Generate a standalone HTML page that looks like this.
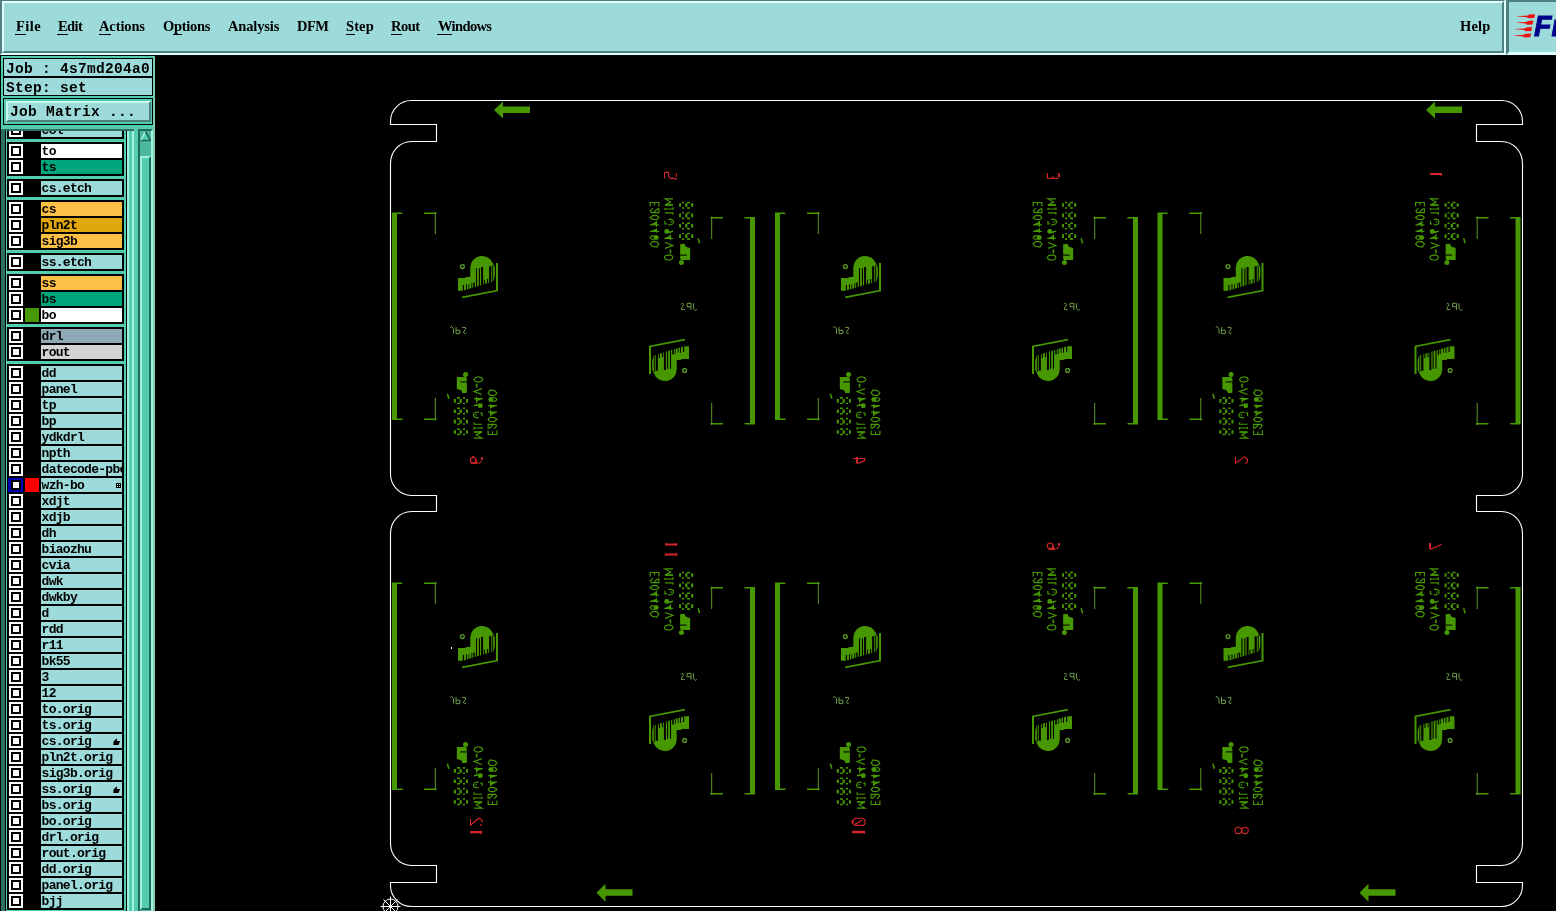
<!DOCTYPE html>
<html><head><meta charset="utf-8"><title>Genesis</title>
<style>
*{margin:0;padding:0;box-sizing:border-box}
html,body{width:1556px;height:911px;overflow:hidden;background:#000}
body{position:relative;font-family:"Liberation Sans",sans-serif}
.abs{position:absolute}
.mi,.fld,.lb,.btn,#logo svg{will-change:transform}
#mb-out{left:0;top:-1px;width:1506px;height:56px;border:2px solid;border-color:#4F7F80 #E0FFFF #E0FFFF #4F7F80;background:#9DDADA}
#mb-in{left:2px;top:1px;width:1502px;height:52px;border:2px solid;border-color:#E0FFFF #4F7F80 #4F7F80 #E0FFFF;background:#9DDADA}
.mi{position:absolute;top:17px;font:bold 14.5px "Liberation Serif",serif;color:#000;white-space:pre;line-height:18px;letter-spacing:0px}
.ul{position:absolute;height:1px;background:#000;top:34px}
#logo{left:1506px;top:-1px;width:60px;height:56px;border-style:solid;border-width:3px 0 3px 3px;border-color:#4F7F80 #E0FFFF #E0FFFF #4F7F80;background:#9DDADA;overflow:hidden}
#side{left:0;top:55px;width:155px;height:856px;background:#52CDAF;overflow:hidden}
.fld{position:absolute;left:4px;width:148px;background:#9DDADA;font:bold 14.5px "Liberation Mono",monospace;letter-spacing:0.3px;line-height:16px;white-space:pre;color:#000;padding-left:2px;overflow:hidden}
.grp{position:absolute;left:7px;width:117px;background:#000}
.row{position:absolute;left:0;width:117px;height:14px}
.cb{position:absolute;left:2px;top:0;width:14px;height:14px;background:#fff}
.cb:before{content:"";position:absolute;left:2px;top:2px;width:10px;height:10px;background:#000}
.cb:after{content:"";position:absolute;left:4px;top:4px;width:6px;height:6px;background:#fff}
.cb.blue{background:#0000B0;left:1px;width:15px}
.cb.blue:before{left:3px}
.cb.blue:after{left:5px}
.sw{position:absolute;left:18px;top:0;width:14px;height:14px}
.lb{position:absolute;left:34px;top:0;width:81px;height:14px;background:#9DDADA;font:bold 13px "Liberation Mono",monospace;letter-spacing:-0.72px;line-height:14px;white-space:pre;overflow:hidden;color:#000;padding-left:0.6px}
.lb span{position:relative;top:1px}
</style></head>
<body>
<div id="mb-out" class="abs"></div><div id="mb-in" class="abs"></div>
<div class="mi" style="left:15.5px;letter-spacing:0.45px">File</div>
<div class="ul" style="left:15px;width:11px"></div>
<div class="mi" style="left:57.8px;letter-spacing:-0.60px">Edit</div>
<div class="ul" style="left:57px;width:11px"></div>
<div class="mi" style="left:99px;letter-spacing:-0.12px">Actions</div>
<div class="ul" style="left:99px;width:12px"></div>
<div class="mi" style="left:162.7px;letter-spacing:-0.28px">Options</div>
<div class="ul" style="left:173px;width:9px"></div>
<div class="mi" style="left:227.5px;letter-spacing:-0.15px">Analysis</div>
<div class="mi" style="left:297px;letter-spacing:-0.51px">DFM</div>
<div class="mi" style="left:346.3px;letter-spacing:0.10px">Step</div>
<div class="ul" style="left:346px;width:9px"></div>
<div class="mi" style="left:391.4px;letter-spacing:-0.54px">Rout</div>
<div class="ul" style="left:391px;width:11px"></div>
<div class="mi" style="left:437.7px;letter-spacing:-0.63px">Windows</div>
<div class="ul" style="left:437px;width:15px"></div>
<div class="mi" style="left:1459.8px;letter-spacing:0.13px">Help</div>
<div id="logo" class="abs"><svg width="60" height="56" style="position:absolute;left:-3px;top:-2px" viewBox="1506 0 60 56"><g fill="#EE1010"><path d="M1516 16.2 L1528 15.6 L1529 14.6 L1535 14.2 L1534.4 18 L1528.5 18.2 L1527 17.2 Z"/><path d="M1515 22.6 L1526.5 22 L1527.5 21 L1533.3 20.6 L1532.7 24.5 L1527 24.7 L1525.5 23.6 Z"/><path d="M1513.4 29 L1525 28.4 L1526 27.4 L1532 27 L1531.4 31 L1525.5 31.2 L1524 30 Z"/><path d="M1512.5 35.4 L1524 34.8 L1525 33.8 L1531 33.4 L1530.4 37.2 L1524.5 37.4 L1523 36.4 Z"/></g><text x="1534" y="36.2" font-family="Liberation Sans" font-weight="bold" font-style="italic" font-size="28.6" fill="#00008B" stroke="#00008B" stroke-width="0.9">Fr</text></svg></div>
<div id="side" class="abs">
<div class="abs" style="left:0;top:0;width:155px;height:1px;background:#000"></div>
<div class="abs" style="left:0;top:0;width:1px;height:856px;background:#000"></div>
<div class="abs" style="left:153px;top:1px;width:2px;height:855px;background:#80CDB5"></div>
<div class="abs" style="left:3px;top:3px;width:150px;height:38px;background:#000"></div>
<div class="fld" style="top:4px;height:17px"><span style="position:relative;top:2px">Job : 4s7md204a0</span></div>
<div class="fld" style="top:23px;height:17px"><span style="position:relative;top:2px">Step: set</span></div>
<div class="abs" style="left:3px;top:43px;width:150px;height:27px;border:1px solid #000;background:#52CDAF"></div>
<div class="abs btn" style="left:6px;top:46px;width:145px;height:21px;border:2px solid;border-color:#C8F5F0 #4F7F80 #4F7F80 #C8F5F0;background:#9DDADA;font:bold 14.5px 'Liberation Mono',monospace;letter-spacing:0.3px;line-height:19px;white-space:pre;padding-left:2px">Job Matrix ...</div>
<div class="abs" style="left:1px;top:74px;width:133px;height:782px;overflow:hidden">
<div class="abs" style="left:0;top:0;width:133px;height:2px;background:#2F6F60"></div>
<div class="abs" style="left:0;top:0;width:4px;height:782px;background:#2F6F60"></div>
<div class="abs" style="left:4px;top:2px;width:1px;height:780px;background:#000"></div>
<div class="grp" style="left:6px;top:-8px;height:18px">
<div class="row" style="top:2px"><div class="cb"></div><div class="lb" style="background:#9DDADA"><span>col</span></div></div>
</div>
<div class="grp" style="left:6px;top:13px;height:34px">
<div class="row" style="top:2px"><div class="cb"></div><div class="lb" style="background:#FFFFFF"><span>to</span></div></div>
<div class="row" style="top:18px"><div class="cb"></div><div class="lb" style="background:#00A67C"><span>ts</span></div></div>
</div>
<div class="grp" style="left:6px;top:50px;height:18px">
<div class="row" style="top:2px"><div class="cb"></div><div class="lb" style="background:#9DDADA"><span>cs.etch</span></div></div>
</div>
<div class="grp" style="left:6px;top:71px;height:50px">
<div class="row" style="top:2px"><div class="cb"></div><div class="lb" style="background:#FDBF45"><span>cs</span></div></div>
<div class="row" style="top:18px"><div class="cb"></div><div class="lb" style="background:#E0A80C"><span>pln2t</span></div></div>
<div class="row" style="top:34px"><div class="cb"></div><div class="lb" style="background:#FDBF45"><span>sig3b</span></div></div>
</div>
<div class="grp" style="left:6px;top:124px;height:18px">
<div class="row" style="top:2px"><div class="cb"></div><div class="lb" style="background:#9DDADA"><span>ss.etch</span></div></div>
</div>
<div class="grp" style="left:6px;top:145px;height:50px">
<div class="row" style="top:2px"><div class="cb"></div><div class="lb" style="background:#FDBF45"><span>ss</span></div></div>
<div class="row" style="top:18px"><div class="cb"></div><div class="lb" style="background:#00A67C"><span>bs</span></div></div>
<div class="row" style="top:34px"><div class="cb"></div><div class="sw" style="background:#479800"></div><div class="lb" style="background:#FFFFFF"><span>bo</span></div></div>
</div>
<div class="grp" style="left:6px;top:198px;height:34px">
<div class="row" style="top:2px"><div class="cb"></div><div class="lb" style="background:#8FA9B5"><span>drl</span></div></div>
<div class="row" style="top:18px"><div class="cb"></div><div class="lb" style="background:#D3D3D3"><span>rout</span></div></div>
</div>
<div class="grp" style="left:6px;top:235px;height:546px">
<div class="row" style="top:2px"><div class="cb"></div><div class="lb" style="background:#9DDADA"><span>dd</span></div></div>
<div class="row" style="top:18px"><div class="cb"></div><div class="lb" style="background:#9DDADA"><span>panel</span></div></div>
<div class="row" style="top:34px"><div class="cb"></div><div class="lb" style="background:#9DDADA"><span>tp</span></div></div>
<div class="row" style="top:50px"><div class="cb"></div><div class="lb" style="background:#9DDADA"><span>bp</span></div></div>
<div class="row" style="top:66px"><div class="cb"></div><div class="lb" style="background:#9DDADA"><span>ydkdrl</span></div></div>
<div class="row" style="top:82px"><div class="cb"></div><div class="lb" style="background:#9DDADA"><span>npth</span></div></div>
<div class="row" style="top:98px"><div class="cb"></div><div class="lb" style="background:#9DDADA"><span>datecode-pbe</span></div></div>
<div class="row" style="top:114px"><div class="cb blue"></div><div class="sw" style="background:#FF0000"></div><div class="lb" style="background:#9DDADA"><span>wzh-bo</span><svg class="abs" style="left:75px;top:5px" width="5" height="5" shape-rendering="crispEdges"><rect width="5" height="5" fill="#000"/><rect x="1" y="1" width="1" height="1" fill="#9DDADA"/><rect x="3" y="1" width="1" height="1" fill="#9DDADA"/><rect x="1" y="3" width="1" height="1" fill="#9DDADA"/><rect x="3" y="3" width="1" height="1" fill="#9DDADA"/></svg></div></div>
<div class="row" style="top:130px"><div class="cb"></div><div class="lb" style="background:#9DDADA"><span>xdjt</span></div></div>
<div class="row" style="top:146px"><div class="cb"></div><div class="lb" style="background:#9DDADA"><span>xdjb</span></div></div>
<div class="row" style="top:162px"><div class="cb"></div><div class="lb" style="background:#9DDADA"><span>dh</span></div></div>
<div class="row" style="top:178px"><div class="cb"></div><div class="lb" style="background:#9DDADA"><span>biaozhu</span></div></div>
<div class="row" style="top:194px"><div class="cb"></div><div class="lb" style="background:#9DDADA"><span>cvia</span></div></div>
<div class="row" style="top:210px"><div class="cb"></div><div class="lb" style="background:#9DDADA"><span>dwk</span></div></div>
<div class="row" style="top:226px"><div class="cb"></div><div class="lb" style="background:#9DDADA"><span>dwkby</span></div></div>
<div class="row" style="top:242px"><div class="cb"></div><div class="lb" style="background:#9DDADA"><span>d</span></div></div>
<div class="row" style="top:258px"><div class="cb"></div><div class="lb" style="background:#9DDADA"><span>rdd</span></div></div>
<div class="row" style="top:274px"><div class="cb"></div><div class="lb" style="background:#9DDADA"><span>r11</span></div></div>
<div class="row" style="top:290px"><div class="cb"></div><div class="lb" style="background:#9DDADA"><span>bk55</span></div></div>
<div class="row" style="top:306px"><div class="cb"></div><div class="lb" style="background:#9DDADA"><span>3</span></div></div>
<div class="row" style="top:322px"><div class="cb"></div><div class="lb" style="background:#9DDADA"><span>12</span></div></div>
<div class="row" style="top:338px"><div class="cb"></div><div class="lb" style="background:#9DDADA"><span>to.orig</span></div></div>
<div class="row" style="top:354px"><div class="cb"></div><div class="lb" style="background:#9DDADA"><span>ts.orig</span></div></div>
<div class="row" style="top:370px"><div class="cb"></div><div class="lb" style="background:#9DDADA"><span>cs.orig</span><svg class="abs" style="left:71.5px;top:3.5px" width="8" height="8"><path d="M3.85 0 L3.85 3.1 L7.3 3.1 L5.4 7.1 L0.4 7.1 L0.4 3.85 Z" fill="#000"/></svg></div></div>
<div class="row" style="top:386px"><div class="cb"></div><div class="lb" style="background:#9DDADA"><span>pln2t.orig</span></div></div>
<div class="row" style="top:402px"><div class="cb"></div><div class="lb" style="background:#9DDADA"><span>sig3b.orig</span></div></div>
<div class="row" style="top:418px"><div class="cb"></div><div class="lb" style="background:#9DDADA"><span>ss.orig</span><svg class="abs" style="left:71.5px;top:3.5px" width="8" height="8"><path d="M3.85 0 L3.85 3.1 L7.3 3.1 L5.4 7.1 L0.4 7.1 L0.4 3.85 Z" fill="#000"/></svg></div></div>
<div class="row" style="top:434px"><div class="cb"></div><div class="lb" style="background:#9DDADA"><span>bs.orig</span></div></div>
<div class="row" style="top:450px"><div class="cb"></div><div class="lb" style="background:#9DDADA"><span>bo.orig</span></div></div>
<div class="row" style="top:466px"><div class="cb"></div><div class="lb" style="background:#9DDADA"><span>drl.orig</span></div></div>
<div class="row" style="top:482px"><div class="cb"></div><div class="lb" style="background:#9DDADA"><span>rout.orig</span></div></div>
<div class="row" style="top:498px"><div class="cb"></div><div class="lb" style="background:#9DDADA"><span>dd.orig</span></div></div>
<div class="row" style="top:514px"><div class="cb"></div><div class="lb" style="background:#9DDADA"><span>panel.orig</span></div></div>
<div class="row" style="top:530px"><div class="cb"></div><div class="lb" style="background:#9DDADA"><span>bjj</span></div></div>
</div>
<div class="abs" style="left:0;top:0;width:133px;height:2px;background:#2F6F60"></div>
<div class="abs" style="left:125px;top:2px;width:1px;height:780px;background:#000"></div>
<div class="abs" style="left:126px;top:2px;width:2px;height:780px;background:#A4F0DE"></div>
<div class="abs" style="left:131px;top:2px;width:2px;height:780px;background:#A4F0DE"></div>
</div>
<div class="abs" style="left:138px;top:74px;width:15px;height:786px;border:2px solid;border-color:#1C6B58 #A4F0DE #A4F0DE #1C6B58;background:#4DB89B"></div>
<svg class="abs" style="left:140px;top:76px" width="11" height="11"><path d="M5.5 0 L11 10 L0 10 Z" fill="#52CDAF"/><path d="M5.5 0.5 L0.5 10" stroke="#A4F0DE" stroke-width="1.6" fill="none"/><path d="M5.5 0.5 L10.5 9.5 L0.5 9.5" stroke="#1C6B58" stroke-width="1.6" fill="none"/></svg>
<div class="abs" style="left:140px;top:101px;width:11px;height:754px;border:2px solid;border-color:#A4F0DE #1C6B58 #1C6B58 #A4F0DE;background:#52CDAF"></div>
</div>
<svg class="abs" style="left:155px;top:55px" width="1401" height="856" viewBox="155 55 1401 856">
<rect x="155" y="55" width="1401" height="856" fill="#000"/>
<defs><g id="bd">
<path d="M750 217H755V424.5H750Z M744 217.8L745.5 217H750V218.6H744Z M744 423H750V424.5H745.5Z" fill="#479800"/>
<path d="M710.4 217H723V218.6H710.4Z M710.4 423H723V424.6H710.4Z" fill="#479800"/>
<path d="M711.7 216.6V239 M711.7 403V425" stroke="#5A9A28" stroke-width="1" fill="none"/>
<path d="M650.1 206.6 L650.1 202.47 L658.88 202.47 L658.88 206.6 M654.49 202.47 L654.49 205.46 M652.82 208.22 L650.36 210.96 L651.48 212.66 L658.88 212.66 L658.88 208.22 M658.06 208.5 L654.23 211.78 M651.48 216.44 L650.1 217.53 L652.03 219.16 L656.95 219.73 L658.88 217.53 L656.95 215.62 L653.12 215.35Z M650.1 224.94 L658.88 224.94 M656.42 221.09 L656.42 226.85 M650.1 231.35 L658.88 231.35 M656.42 228.47 L656.42 232.86 M653.61 235.58 L651.42 236.11 L650.1 237.51 L651.42 239.01 L653.61 239.45 M651.48 242.43 L650.1 243.75 L652.03 246.21 L656.95 247.09 L658.88 244.01 L656.95 241.82 L653.09 241.38Z M672.94 198.9 L664.98 198.9 L670.65 202.12 L664.98 205.05 L672.94 205.05 M664.98 209.03 L672.94 209.03 M664.98 208 L664.98 210.11 M672.94 207.13 L672.94 210.11 M664.98 212.8 L672.94 212.8 L672.94 214.86 M664.94 220.65 L664.94 223.9 L666.79 223.9 M668.19 219.51 L670.48 219.16 L672.94 220.3 L673.64 222.06 L672.67 223.9 L670.48 224.96 L668.19 224.69 M670.3 222.06 L671.79 222.06 M664.24 238.36 L672.94 238.36 M670.41 234.35 L670.41 240.15 M664.98 242.52 L672.94 245.51 L664.98 248.41 M668.98 254.82 L665.47 255.69 L664.24 257.45 L665.47 259.38 L668.98 260.26 L671.79 259.38 L672.94 257.45 L671.79 255.52Z" fill="none" stroke="#479800" stroke-width="1.15"/>
<path d="M650.1 224.78 L656.42 221.62 L656.42 224.78Z M650.1 231.28 L656.42 228.78 L656.42 231.28Z M653.67 235.32 L657.57 235.32 L658.88 237.51 L657.57 239.71 L653.67 239.71Z M664.94 229.35 L668.28 229 L669.16 231.28 L668.28 233.65 L664.94 233.39 L664.24 231.45Z M668.54 231.45 L673.2 230.58 L673.2 231.81 L669.42 233.21Z M664.59 238.22 L670.39 235.49 L670.39 238.22Z M679.08 203.17H681.02V206.86H679.08Z M685.23 203.17H687.43V206.86H685.23Z M691.12 203.17H693.22V206.86H691.12Z M681.98 201.86H684.09V203.17H681.98Z M687.08 201.86H690.06V203.17H687.08Z M681.98 207.21H684.09V208.8H681.98Z M687.08 207.21H690.06V208.8H687.08Z M679.08 213.54H681.02V217.23H679.08Z M685.23 213.54H687.43V217.23H685.23Z M691.12 213.54H693.22V217.23H691.12Z M681.98 212.22H684.09V213.54H681.98Z M687.08 212.22H690.06V213.54H687.08Z M681.98 217.58H684.09V219.16H681.98Z M687.08 217.58H690.06V219.16H687.08Z M679.08 223.9H681.02V227.59H679.08Z M685.23 223.9H687.43V227.59H685.23Z M691.12 223.9H693.22V227.59H691.12Z M681.98 222.58H684.09V223.9H681.98Z M687.08 222.58H690.06V223.9H687.08Z M681.98 227.94H684.09V229.52H681.98Z M687.08 227.94H690.06V229.52H687.08Z M679.08 234.26H681.02V237.95H679.08Z M685.23 234.26H687.43V237.95H685.23Z M691.12 234.26H693.22V237.95H691.12Z M681.98 232.95H684.09V234.26H681.98Z M687.08 232.95H690.06V234.26H687.08Z M681.98 238.3H684.09V239.89H681.98Z M687.08 238.3H690.06V239.89H687.08Z M680.14 244.19 L684.35 243.75 L685.93 246.82 L690.15 247.97 L690.15 259.91 L681.28 259.91 L680.14 258.77Z" fill="#479800"/>
<path d="M679.96 254.55H686.72V255.61H679.96Z" fill="#000"/>
<path d="M664.98 205.05 L672.94 205.05 M670.39 249.55 L670.39 253.24" fill="none" stroke="#479800" stroke-width="1.6"/>
<circle cx="681.45" cy="262.46" r="2.5" fill="#479800"/>
<path d="M698.14 238.3 L699.63 243.22" stroke="#479800" stroke-width="1.5" fill="none"/>
<path d="M680.97 304.47 L682.07 303.23 L683.72 304.47 L681.52 307.89 L681.52 309.54 L684.81 309.54 M690.99 309.95 L690.99 303.37 L687.15 303.37 L687.15 306.8 L690.99 306.8 M693.46 303.23 L693.46 308.17 L695.51 310.64 L696.89 309.27" stroke="#6C9A48" stroke-width="1" fill="none"/>
<g transform="rotate(180 573.5 318.5)"><path d="M458 278 L465.4 278 L465.4 277.2 L470.3 276.8 L470.3 267.3 A11.8 11.8 0 0 1 493.3 264 L494.8 267.2 L494.8 276.2 L493.4 281.4 L462.8 290.8 L458 290.8 Z" fill="#479800"/>
<path d="M475.95 268.3H477.05V288H475.95Z M478.85 268.3H479.95V287H478.85Z M481.1 267.1H483.1V286.5H481.1Z M489.1 266.3H491.3V284H489.1Z M492.25 265H493.15V283H492.25Z M483.95 279.7H485.05V286H483.95Z M487.05 279H488.15V285H487.05Z M462.8 285H464V291H462.8Z M466 284.2H467V291H466Z M468.5 284.2H469.3V290H468.5Z M471.4 283H472.2V289H471.4Z M473.25 282.5H474.75V288.5H473.25Z" fill="#000"/>
<path d="M496 263.1H498V291.2L462.2 298.2L462 296.6L496 290Z" fill="#479800"/>
<circle cx="462.4" cy="266.6" r="1.9" stroke="#5A9A28" stroke-width="1.3" fill="none"/></g>
</g></defs>
<path d="M411.5 100.5 H1501.5 A21 21 0 0 1 1522.5 121.5 V124.5 H1476.5 V141.5 H1501.5 A21 22 0 0 1 1522.5 163.5 V472.5 A21 22 0 0 1 1501.5 495.5 H1476.5 V511.5 H1501.5 A21 22 0 0 1 1522.5 533.5 V843 A21 22 0 0 1 1501.5 865.5 H1476.5 V882.5 H1522.5 V885.5 A21 21 0 0 1 1501.5 906.5 H411.5 A21 21 0 0 1 390.5 885.5 V882.5 H436.5 V865.5 H411.5 A21 22 0 0 1 390.5 843 V533.5 A21 22 0 0 1 411.5 511.5 H436.5 V495.5 H411.5 A21 22 0 0 1 390.5 472.5 V163.5 A21 22 0 0 1 411.5 141.5 H436.5 V124.5 H390.5 V121.5 A21 21 0 0 1 411.5 100.5 Z" stroke="#fff" stroke-width="1.1" fill="none"/>
<use href="#bd" transform="translate(0 0)"/>
<use href="#bd" transform="translate(0 0) rotate(180 573.5 318.5)"/>
<use href="#bd" transform="translate(383 0)"/>
<use href="#bd" transform="translate(383 0) rotate(180 573.5 318.5)"/>
<use href="#bd" transform="translate(765.5 0)"/>
<use href="#bd" transform="translate(765.5 0) rotate(180 573.5 318.5)"/>
<use href="#bd" transform="translate(0 370)"/>
<use href="#bd" transform="translate(0 370) rotate(180 573.5 318.5)"/>
<use href="#bd" transform="translate(383 370)"/>
<use href="#bd" transform="translate(383 370) rotate(180 573.5 318.5)"/>
<use href="#bd" transform="translate(765.5 370)"/>
<use href="#bd" transform="translate(765.5 370) rotate(180 573.5 318.5)"/>
<path d="M494 110 l9 -8.5 v5.0 h27 v6.5 h-27 v5.5 Z" fill="#479800"/>
<path d="M1426 110 l9 -8.5 v5.0 h27 v6.5 h-27 v5.5 Z" fill="#479800"/>
<path d="M596.5 892.8 l9 -9 v5.5 h27 v6.5 h-27 v6 Z" fill="#479800"/>
<path d="M1359.5 892.8 l9 -9 v5.5 h27 v6.5 h-27 v6 Z" fill="#479800"/>
<g stroke="#fff" stroke-width="1" fill="none"><circle cx="390.5" cy="906.5" r="7.5"/><path d="M380.5 906.5H400.5 M390.5 896.5V916.5 M383.5 899.5L397.5 913.5 M383.5 913.5L397.5 899.5"/></g>
<rect x="451" y="647" width="1" height="2" fill="#fff"/>
<path d="M664.44 178.61 L664.44 173.12 L665.32 172.35 L668.17 172.35 L668.72 173.12 L668.72 176.41 L670.36 178.39 L674.75 178.39 L675.85 179.49 L676.73 178.39 M675.41 173.45 L676.4 173.78 L676.4 176.63 M1047.44 173.12 L1047.44 178.32 L1058.85 178.39 M1052.71 176.19 L1052.71 178.28 M1057.32 173.45 L1058.85 173.78 M470.32 460.32a2.85 2.85 0 1 0 5.7 0a2.85 2.85 0 1 0 -5.7 0Z M478.88 463.17 L481.51 461.41 M852.99 458.45 L864.73 458.45 L864.73 460.54 L857.93 463.61 M1235.44 457.02 L1235.44 463.17 L1242.68 458.12 L1244 456.8 L1245.75 457.24 L1247.51 459.88 L1247.07 462.73 L1245.32 463.61 M676.68 543.1 L676.68 545.98 M676.68 553.11 L676.68 556.13 M665.43 554.48 L665.43 555.99 M666.39 543.1 L666.39 544.47 M1047.32 545.7a2.75 2.75 0 1 0 5.5 0a2.75 2.75 0 1 0 -5.5 0Z M1056.39 548.72 L1058.86 547.35 M1430.43 549.41 L1441.68 544.33 M470.45 819.07 L470.45 825.22 L478.44 818.46 L480.9 819.07 L482.75 822.14 M480.29 825.53 L481.83 824.3 M852.22 821.22 L854.99 818.3 L862.98 818.3 L864.98 819.99 L864.98 823.68 L863.29 825.37 L854.99 825.37 L852.22 822.76Z M855.3 824.3 L862.06 819.99 M1235.1 830.44a3.2 3.2 0 1 0 6.4 0a3.2 3.2 0 1 0 -6.4 0Z M1241.86 830.44a3.2 3.2 0 1 0 6.4 0a3.2 3.2 0 1 0 -6.4 0Z" stroke="#D8242C" stroke-width="1.1" fill="none"/>
<path d="M857.05 457.02 L857.05 463.39 M665.02 544.47 L676.95 544.47 M665.02 554.48 L676.95 554.48 M1430.02 543.1 L1430.02 549.27" stroke="#D8242C" stroke-width="1.9" fill="none"/>
<path d="M1058.08 173.78H1059.95V177.07H1058.08Z M1429.99 173.01H1441.95V174.99H1429.99Z M1440.96 174.99H1441.95V175.97H1440.96Z M470.32 462.29 L477.56 462.29 L478.66 463.83 L470.97 463.83Z M480.85 457.24H483.05V459.77H480.85Z M472.07 456.91a1.1 1.1 0 1 0 2.2 0a1.1 1.1 0 1 0 -2.2 0Z M475.36 458.78 L476.68 460.32 L477.56 462.29 L475.36 462.29Z M1048.15 548.45 L1054.74 548.45 L1056.11 549.96 L1048.98 549.96Z M1058.03 542.96H1059.95V545.7H1058.03Z M1052.27 543.78 L1053.64 545.98 L1054.74 548.45 L1052.27 548.45Z M470.14 831.06H482.13V833.21H470.14Z M480.6 833.21H482.13V833.98H480.6Z M852.22 830.75H864.98V833.21H852.22Z M863.6 833.21H864.98V833.98H863.6Z M851.91 820.3 L853.45 820.3 L853.45 823.37 L851.91 823.37Z" fill="#D8242C"/>
</svg>
</body></html>
